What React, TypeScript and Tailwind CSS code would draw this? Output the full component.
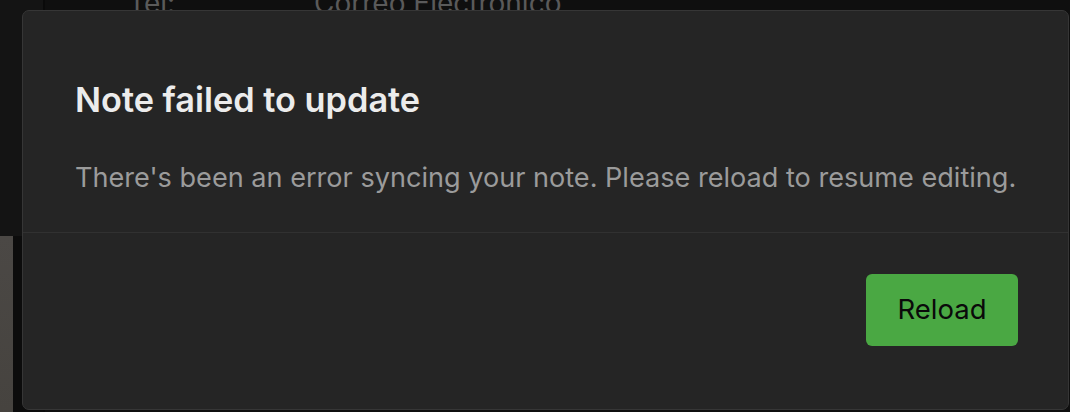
import React from "react";

export default function App() {
  return (
    <div
      className="relative h-[412px] w-[1070px] overflow-hidden bg-[#0f0f0f]"
      style={{ fontFamily: "Inter, 'Noto Sans', sans-serif" }}
    >
      {/* background app */}
      <div className="flex h-full">
        <div className="flex h-full w-[43px] flex-col bg-[#141414]">
          <div className="h-[236px]" />
          <div className="flex flex-1">
            <div className="w-[13px] bg-gradient-to-b from-[#4b4845] to-[#46433f]" />
            <div className="flex-1 bg-[#0c0c0c]" />
          </div>
        </div>
        <div className="w-[2px] bg-[#0a0a0a]" />
        <div className="flex-1">
          <div className="-mt-[14px] flex text-[28px] leading-[34px] text-[#5a5a5a]">
            <span className="ml-[83px]">Tel:</span>
            <span className="ml-[139px]">Correo Electronico</span>
          </div>
        </div>
      </div>

      {/* modal */}
      <div className="absolute left-[22px] top-[10px] flex h-[400px] w-[1047px] flex-col rounded-[7px] border border-[#363636] bg-[#252525]">
        <div className="flex h-[221px] flex-col px-[52px] pt-[69px]">
          <h2 className="text-[34.3px] font-semibold leading-[40px] text-[#ececec]">
            Note failed to update
          </h2>
          <p className="mt-[42px] whitespace-nowrap text-[27.1px] leading-[32px] text-[#9b9b9b]">
            There's been an error syncing your note. Please reload to resume editing.
          </p>
        </div>
        <div className="h-px bg-[#313131]" />
        <div className="flex justify-end px-[50px] pt-[41px]">
          <button className="flex h-[72px] w-[152px] items-center justify-center rounded-[6px] bg-[#4aa843] text-[27.5px] text-[#0a0a0a]">
            Reload
          </button>
        </div>
      </div>
    </div>
  );
}
